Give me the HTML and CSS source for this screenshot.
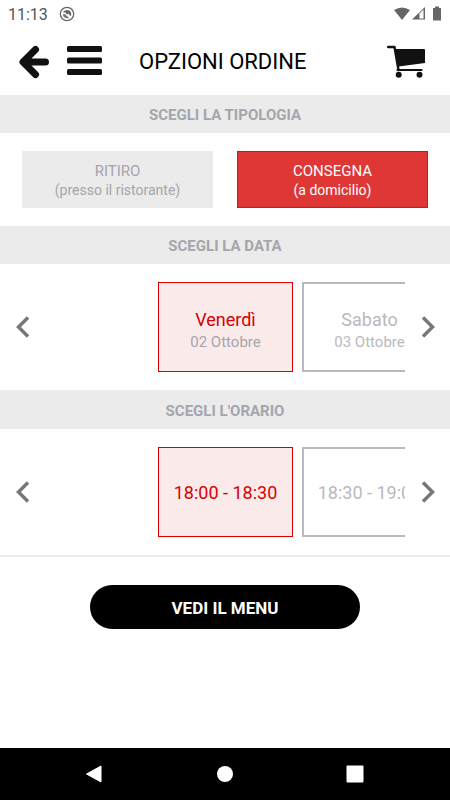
FILE: index.html
```html
<!DOCTYPE html>
<html lang="it">
<head>
  <meta charset="UTF-8">
  <meta name="viewport" content="width=device-width, initial-scale=1.0">
  <title>Opzioni ordine</title>

  <link rel="stylesheet" href="styles.css">
</head>
<body>
  <div class="status_bar">
    <span class="clock">11:13</span>
    <svg class="app_icon" width="16" height="16" viewBox="0 0 16 16">
      <circle cx="8" cy="8" r="6.7" fill="none" stroke="#666" stroke-width="1.3"/>
      <path d="M4 6.5C5 4.2 8 3.2 10.3 4.6C12.4 5.9 12.8 8.5 11.8 10.3L9.4 7.8L7.8 8.5L6.6 6.6Z" fill="#666"/>
      <path d="M3.8 8.2L5.7 8L10.3 12C7.2 13.2 4 11.4 3.8 8.2Z" fill="#777"/>
    </svg>
    <svg class="signals" width="50" height="16" viewBox="0 0 50 16">
      <path d="M2 4Q10 -1 18 4L10 14Z" fill="#666"/>
      <path d="M33 1V13.500H20Z" fill="#666"/>
      <path d="M27.500 7.500L31.500 3.500V12.500H27.500Z" fill="#fff"/>
      <path d="M43 0.500H47V2H49V14.500H41V2H43Z" fill="#666"/>
    </svg>
  </div>

  <header class="header">
    <button class="icon_button" type="button" aria-label="Indietro">
      <svg width="30" height="34" viewBox="0 0 30 34">
        <path d="M16.500 4.500L4 17L16.500 29.500M5 17H26.500" fill="none" stroke="#111" stroke-width="7" stroke-linecap="round" stroke-linejoin="round"/>
      </svg>
    </button>
    <button class="icon_button" type="button" aria-label="Menu">
      <svg width="35" height="34" viewBox="0 0 35 34">
        <rect x="0" y="1" width="35" height="6" rx="1.500" fill="#111"/>
        <rect x="0" y="12.500" width="35" height="6" rx="1.500" fill="#111"/>
        <rect x="0" y="24" width="35" height="6" rx="1.500" fill="#111"/>
      </svg>
    </button>
    <h1>OPZIONI ORDINE</h1>
    <button class="icon_button" type="button" aria-label="Carrello">
      <svg width="39" height="34" viewBox="0 0 39 34">
        <path d="M1.200 2H7.500L11.500 25" fill="none" stroke="#111" stroke-width="2.400" stroke-linecap="round" stroke-linejoin="round"/>
        <path d="M8 4H37Q38 4 38 5V18L11.500 21.500Z" fill="#111"/>
        <path d="M10.500 25H34.500" stroke="#111" stroke-width="2.200" stroke-linecap="round"/>
        <circle cx="11.700" cy="29.800" r="3" fill="#111"/>
        <circle cx="32.500" cy="29.800" r="3" fill="#111"/>
      </svg>
    </button>
  </header>

  <main>
    <h2>SCEGLI LA TIPOLOGIA</h2>
    <div class="types">
      <button class="type" type="button" aria-pressed="false">RITIRO<small>(presso il ristorante)</small></button>
      <button class="type selected" type="button" aria-pressed="true">CONSEGNA<small>(a domicilio)</small></button>
    </div>

    <h2>SCEGLI LA DATA</h2>
    <div class="picker">
      <button class="arrow" type="button" aria-label="Data precedente">
        <svg width="14" height="22" viewBox="0 0 14 22">
          <path d="M12 1.500L2.500 11L12 20.500" fill="none" stroke="#777" stroke-width="3.500"/>
        </svg>
      </button>
      <div class="track">
        <button class="card day selected" type="button" aria-pressed="true">Venerdì<small>02 Ottobre</small></button>
        <button class="card day" type="button" aria-pressed="false">Sabato<small>03 Ottobre</small></button>
      </div>
      <button class="arrow" type="button" aria-label="Data successiva">
        <svg width="14" height="22" viewBox="0 0 14 22">
          <path d="M2 1.500L11.500 11L2 20.500" fill="none" stroke="#777" stroke-width="3.500"/>
        </svg>
      </button>
    </div>

    <h2>SCEGLI L'ORARIO</h2>
    <div class="picker">
      <button class="arrow" type="button" aria-label="Orario precedente">
        <svg width="14" height="22" viewBox="0 0 14 22">
          <path d="M12 1.500L2.500 11L12 20.500" fill="none" stroke="#777" stroke-width="3.500"/>
        </svg>
      </button>
      <div class="track">
        <button class="card selected" type="button" aria-pressed="true">18:00 - 18:30</button>
        <button class="card" type="button" aria-pressed="false">18:30 - 19:00</button>
      </div>
      <button class="arrow" type="button" aria-label="Orario successivo">
        <svg width="14" height="22" viewBox="0 0 14 22">
          <path d="M2 1.500L11.500 11L2 20.500" fill="none" stroke="#777" stroke-width="3.500"/>
        </svg>
      </button>
    </div>

    <div class="submit">
      <button class="menu_button" type="button">VEDI IL MENU</button>
    </div>
  </main>

  <nav class="system_nav">
    <button type="button" aria-label="Indietro">
      <svg width="18" height="18" viewBox="0 0 18 18"><path d="M0.500 9L15 1V17Z" fill="#fff" stroke="#fff" stroke-linejoin="round"/></svg>
    </button>
    <button type="button" aria-label="Home">
      <svg width="18" height="18" viewBox="0 0 18 18"><circle cx="9" cy="9" r="8" fill="#fff"/></svg>
    </button>
    <button type="button" aria-label="Recenti">
      <svg width="18" height="18" viewBox="0 0 18 18"><rect x="0.500" y="0.500" width="17" height="17" rx="1" fill="#fff"/></svg>
    </button>
  </nav>
</body>
</html>
```

FILE: styles.css
```css
* {
  box-sizing: border-box;
  font-family: Roboto, Arial, sans-serif;
}

body {
  margin: 0;
  min-height: 100vh;
  display: flex;
  flex-direction: column;
  background: #fff;
}

main {
  flex: 1;
}

button {
  padding: 0;
  border: none;
  background: none;
  cursor: pointer;
}

svg {
  display: block;
}

small {
  display: block;
  font-size: 14px;
}

.status_bar {
  display: flex;
  align-items: center;
  height: 28px;
  padding: 0 8px;
  color: #555;
}

.clock {
  font-size: 16px;
}

.app_icon {
  margin-left: 11px;
}

.signals {
  margin-left: auto;
}

.header {
  display: flex;
  align-items: center;
  height: 67px;
  padding: 0 24px 0 19px;
}

.header h1 {
  flex: 1;
  margin: 0 0 0 37px;
  font-size: 22px;
  font-weight: 400;
  color: #000;
}

.icon_button + .icon_button {
  margin-left: 18px;
}

h2 {
  margin: 0;
  padding-top: 2px;
  background: #ebebeb;
  color: #a5a5ad;
  font-size: 15px;
  font-weight: 700;
  line-height: 36px;
  text-align: center;
}

.types {
  display: flex;
  gap: 24px;
  padding: 18px 22px;
}

.type {
  flex: 1;
  height: 57px;
  padding-top: 2px;
  border: 1px solid #ebebeb;
  background: #ebebeb;
  color: #a5a5ad;
  font-size: 15px;
  line-height: 19px;
}

.type.selected {
  border-color: #e31010;
  background: #de3736;
  color: #fff;
}

.picker {
  display: flex;
  border-bottom: 1px solid #ebebeb;
}

.arrow {
  display: flex;
  align-items: center;
  justify-content: center;
  width: 45px;
}

/* keeps the first card in the middle, the next ones run under the right edge */
.track {
  flex: 1;
  display: flex;
  gap: 9px;
  min-width: 0;
  padding: 18px 0 18px calc(50% - 112px);
  overflow: hidden;
}

.card {
  flex: none;
  width: 135px;
  height: 90px;
  padding-top: 2px;
  border: 2px solid #b9b9be;
  color: #b9b9be;
  font-size: 18px;
  line-height: 22px;
  white-space: nowrap;
}

.card.day {
  padding-top: 8px;
}

.card small {
  font-size: 15px;
}

.card.selected {
  border: 1px solid #d80000;
  background: #fbeaea;
  color: #d80000;
}

.card.selected small {
  color: #a5a5ad;
}

.submit {
  border-top: 1px solid #ebebeb;
  padding: 28px 0;
  text-align: center;
}

.menu_button {
  width: 60%;
  height: 44px;
  padding-top: 2px;
  border-radius: 22px;
  background: #000;
  color: #fff;
  font-size: 17px;
  font-weight: 700;
}

.system_nav {
  display: flex;
  align-items: center;
  justify-content: space-between;
  height: 52px;
  padding: 0 86px;
  background: #000;
}
```
